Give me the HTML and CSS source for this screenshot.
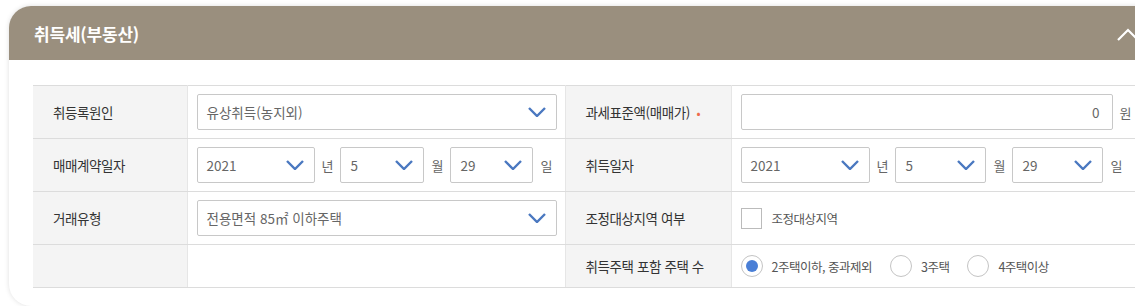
FILE: index.html
```html
<!DOCTYPE html>
<html lang="ko">
<head>
    <meta charset="UTF-8">
    <meta name="viewport" content="width=device-width, initial-scale=1.0">
    <title>취득세(부동산)</title>
    <link rel="stylesheet" href="styles.css">
</head>
<body>
    <div class="wrap">
        <div class="card">
            <div class="card-head">
                <h2 class="card-title">취득세(부동산)</h2>
                <svg class="fold" width="24" height="14" viewBox="0 0 24 14"><polyline points="2,12 12,2 22,12" fill="none" stroke="#fff" stroke-width="2.2"/></svg>
            </div>
            <div class="card-body">
                <table class="form-table">
                    <colgroup>
                        <col style="width:154px">
                        <col style="width:378px">
                        <col style="width:166px">
                        <col>
                    </colgroup>
                    <tr>
                        <th>취등록원인</th>
                        <td>
                            <div class="select w-full"><span>유상취득(농지외)</span><svg width="18" height="10" viewBox="0 0 18 10"><polyline points="1,1 9,9 17,1" fill="none" stroke="#4a78c0" stroke-width="2.4"/></svg></div>
                        </td>
                        <th>과세표준액(매매가) <span class="req">•</span></th>
                        <td>
                            <div class="line">
                                <div class="input num">0</div>
                                <span class="unit">원</span>
                            </div>
                        </td>
                    </tr>
                    <tr>
                        <th>매매계약일자</th>
                        <td>
                            <div class="line">
                                <div class="select" style="width:118px"><span>2021</span><svg width="18" height="10" viewBox="0 0 18 10"><polyline points="1,1 9,9 17,1" fill="none" stroke="#4a78c0" stroke-width="2.4"/></svg></div>
                                <span class="unit">년</span>
                                <div class="select" style="width:84px"><span>5</span><svg width="18" height="10" viewBox="0 0 18 10"><polyline points="1,1 9,9 17,1" fill="none" stroke="#4a78c0" stroke-width="2.4"/></svg></div>
                                <span class="unit">월</span>
                                <div class="select" style="width:83px"><span>29</span><svg width="18" height="10" viewBox="0 0 18 10"><polyline points="1,1 9,9 17,1" fill="none" stroke="#4a78c0" stroke-width="2.4"/></svg></div>
                                <span class="unit">일</span>
                            </div>
                        </td>
                        <th>취득일자</th>
                        <td>
                            <div class="line">
                                <div class="select" style="width:129px"><span>2021</span><svg width="18" height="10" viewBox="0 0 18 10"><polyline points="1,1 9,9 17,1" fill="none" stroke="#4a78c0" stroke-width="2.4"/></svg></div>
                                <span class="unit">년</span>
                                <div class="select" style="width:91px"><span>5</span><svg width="18" height="10" viewBox="0 0 18 10"><polyline points="1,1 9,9 17,1" fill="none" stroke="#4a78c0" stroke-width="2.4"/></svg></div>
                                <span class="unit">월</span>
                                <div class="select" style="width:91px"><span>29</span><svg width="18" height="10" viewBox="0 0 18 10"><polyline points="1,1 9,9 17,1" fill="none" stroke="#4a78c0" stroke-width="2.4"/></svg></div>
                                <span class="unit">일</span>
                            </div>
                        </td>
                    </tr>
                    <tr>
                        <th>거래유형</th>
                        <td>
                            <div class="select w-full"><span>전용면적 85㎡ 이하주택</span><svg width="18" height="10" viewBox="0 0 18 10"><polyline points="1,1 9,9 17,1" fill="none" stroke="#4a78c0" stroke-width="2.4"/></svg></div>
                        </td>
                        <th>조정대상지역 여부</th>
                        <td>
                            <label class="check"><span class="box"></span>조정대상지역</label>
                        </td>
                    </tr>
                    <tr class="short">
                        <th></th>
                        <td></td>
                        <th>취득주택 포함 주택 수</th>
                        <td>
                            <div class="radios">
                                <label class="radio"><span class="dot on"></span>2주택이하, 중과제외</label>
                                <label class="radio"><span class="dot"></span>3주택</label>
                                <label class="radio"><span class="dot"></span>4주택이상</label>
                            </div>
                        </td>
                    </tr>
                </table>
            </div>
        </div>
    </div>
</body>
</html>
```

FILE: styles.css
```css
body {
    margin: 0;
    background: #fff;
    font-family: 'Noto Sans CJK KR', 'Noto Sans', sans-serif;
    color: #333;
    overflow: hidden;
}

.wrap {
    padding: 6px 0 0 9px;
}

.card {
    width: 1161px;
    height: 300px;
    background: #fff;
    border-radius: 22px;
    box-shadow: 0 0 5px rgba(0, 0, 0, 0.13);
    overflow: hidden;
}

.card-head {
    height: 54px;
    background: #9a8f7e;
    display: flex;
    align-items: center;
    justify-content: space-between;
    padding: 0 30px 0 25px;
}

.card-title {
    margin: 0;
    color: #fff;
    font-size: 17px;
    font-weight: bold;
    letter-spacing: -0.2px;
}

.fold {
    margin-top: 3px;
}

.card-body {
    padding: 25px 24px 19px 24px;
}

.form-table {
    width: 1111px;
    border-collapse: collapse;
    table-layout: fixed;
    border-top: 1px solid #dcdcdc;
}

.form-table th,
.form-table td {
    border-bottom: 1px solid #dcdcdc;
    padding: 8px 9px;
    height: 36px;
    vertical-align: middle;
}

.form-table th {
    background: #f4f4f4;
    text-align: left;
    font-weight: normal;
    font-size: 13.5px;
    letter-spacing: -0.4px;
    color: #333;
    padding-left: 20px;
    border-right: 1px solid #e6e6e6;
}

.form-table td {
    border-right: 1px solid #e6e6e6;
}

.form-table .short th,
.form-table .short td {
    height: 22px;
    padding-top: 10px;
    padding-bottom: 10px;
}

.req {
    color: #ee6a4a;
    font-size: 12px;
    margin-left: 3px;
}

.line {
    display: flex;
    align-items: center;
}

.select {
    flex-shrink: 0;
    box-sizing: border-box;
    height: 36px;
    border: 1px solid #c8c8c8;
    border-radius: 2px;
    background: #fff;
    display: flex;
    align-items: center;
    justify-content: space-between;
    padding: 0 10px 0 9px;
    font-size: 13.5px;
    color: #666;
}

.select.w-full {
    width: 360px;
}

.input {
    flex-shrink: 0;
    box-sizing: border-box;
    height: 36px;
    width: 372px;
    border: 1px solid #c8c8c8;
    border-radius: 2px;
    background: #fff;
    display: flex;
    align-items: center;
    padding: 0 12px;
    font-size: 13.5px;
    color: #666;
}

.input.num {
    justify-content: flex-end;
}

.unit {
    flex-shrink: 0;
    font-size: 13px;
    color: #666;
    margin: 0 7px;
}

.unit:last-child {
    margin-right: 0;
}

.check,
.radio {
    display: flex;
    align-items: center;
    font-size: 12.5px;
    letter-spacing: -0.5px;
    color: #555;
}

.box {
    width: 21px;
    height: 21px;
    box-sizing: border-box;
    border: 1px solid #bbb;
    background: #fff;
    margin-right: 10px;
}

.radios {
    display: flex;
    align-items: center;
    gap: 18px;
}

.dot {
    width: 22px;
    height: 22px;
    box-sizing: border-box;
    border: 1px solid #c4c4c4;
    border-radius: 50%;
    background: #fff;
    margin-right: 9px;
    display: flex;
    align-items: center;
    justify-content: center;
}

.dot.on::after {
    content: '';
    width: 12px;
    height: 12px;
    border-radius: 50%;
    background: #4a7fd6;
}
```
